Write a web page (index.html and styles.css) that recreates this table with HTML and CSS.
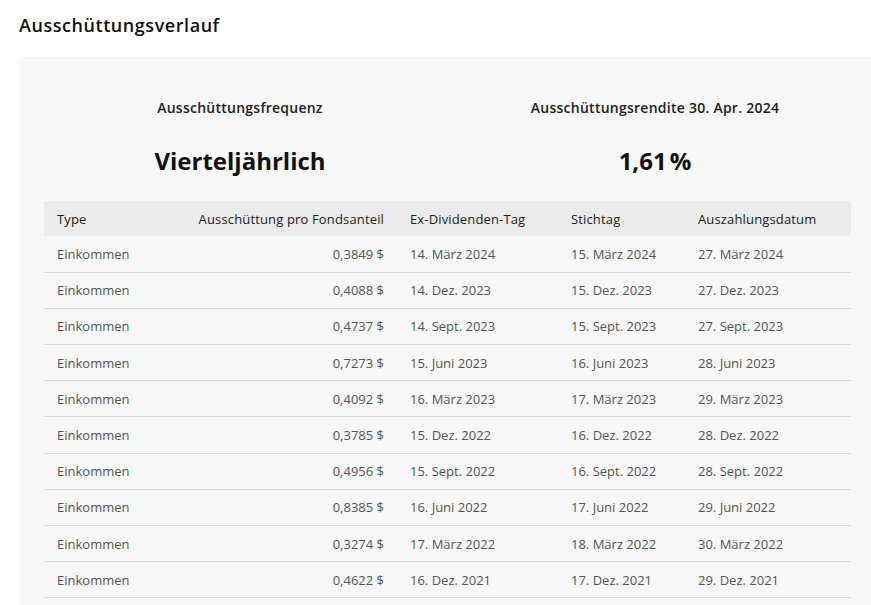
FILE: index.html
```html
<!DOCTYPE html>
<html lang="de">
<head>
<meta charset="utf-8">
<title>Ausschüttungsverlauf</title>
<link rel="stylesheet" href="styles.css">
</head>
<body>
<h2 class="title">Ausschüttungsverlauf</h2>
<section class="panel">
  <div class="stats">
    <div class="stat">
      <div class="stat-label">Ausschüttungsfrequenz</div>
      <div class="stat-value">Vierteljährlich</div>
    </div>
    <div class="stat">
      <div class="stat-label">Ausschüttungsrendite 30. Apr. 2024</div>
      <div class="stat-value">1,61&#8239;%</div>
    </div>
  </div>
  <table class="dist">
    <colgroup>
      <col class="c1"><col class="c2"><col class="c3"><col class="c4"><col class="c5">
    </colgroup>
    <thead>
      <tr><th>Type</th><th class="num">Ausschüttung pro Fondsanteil</th><th>Ex-Dividenden-Tag</th><th>Stichtag</th><th>Auszahlungsdatum</th></tr>
    </thead>
    <tbody>
      <tr><td>Einkommen</td><td class="num">0,3849 $</td><td>14. März 2024</td><td>15. März 2024</td><td>27. März 2024</td></tr>
      <tr><td>Einkommen</td><td class="num">0,4088 $</td><td>14. Dez. 2023</td><td>15. Dez. 2023</td><td>27. Dez. 2023</td></tr>
      <tr><td>Einkommen</td><td class="num">0,4737 $</td><td>14. Sept. 2023</td><td>15. Sept. 2023</td><td>27. Sept. 2023</td></tr>
      <tr><td>Einkommen</td><td class="num">0,7273 $</td><td>15. Juni 2023</td><td>16. Juni 2023</td><td>28. Juni 2023</td></tr>
      <tr><td>Einkommen</td><td class="num">0,4092 $</td><td>16. März 2023</td><td>17. März 2023</td><td>29. März 2023</td></tr>
      <tr><td>Einkommen</td><td class="num">0,3785 $</td><td>15. Dez. 2022</td><td>16. Dez. 2022</td><td>28. Dez. 2022</td></tr>
      <tr><td>Einkommen</td><td class="num">0,4956 $</td><td>15. Sept. 2022</td><td>16. Sept. 2022</td><td>28. Sept. 2022</td></tr>
      <tr><td>Einkommen</td><td class="num">0,8385 $</td><td>16. Juni 2022</td><td>17. Juni 2022</td><td>29. Juni 2022</td></tr>
      <tr><td>Einkommen</td><td class="num">0,3274 $</td><td>17. März 2022</td><td>18. März 2022</td><td>30. März 2022</td></tr>
      <tr><td>Einkommen</td><td class="num">0,4622 $</td><td>16. Dez. 2021</td><td>17. Dez. 2021</td><td>29. Dez. 2021</td></tr>
    </tbody>
  </table>
</section>
</body>
</html>
```
FILE: styles.css
```css
* { box-sizing: border-box; }
html, body { margin: 0; padding: 0; background: #fff; }
body {
  font-family: "Open Sans", "Liberation Sans", sans-serif;
  color: #1a1a1a;
  overflow: hidden;
}
.title {
  margin: 0;
  padding: 13px 0 0 19px;
  height: 57px;
  font-size: 18px;
  line-height: 24px;
  font-weight: 600;
  letter-spacing: 0.55px;
  color: #111;
}
.panel {
  margin-left: 19px;
  background: #f7f7f7;
  padding: 0 20px 40px 25px;
}
.stats {
  display: grid;
  grid-template-columns: 1fr 1fr;
  column-gap: 23px;
  padding-top: 42px;
  height: 144px;
  text-align: center;
}
.stat-label {
  font-size: 14px;
  font-weight: 600;
  letter-spacing: 0.25px;
  color: #222;
  line-height: 18px;
}
.stat-value {
  margin-top: 29px;
  font-size: 24px;
  font-weight: 700;
  color: #111;
  line-height: 30px;
}
.dist {
  width: 100%;
  border-collapse: collapse;
  table-layout: fixed;
  font-size: 13px;
}
.c1 { width: 141px; }
.c2 { width: 212px; }
.c3 { width: 161px; }
.c4 { width: 127px; }
.c5 { width: 166px; }
.dist th {
  background: #ebebeb;
  height: 35px;
  padding: 0 13px;
  text-align: left;
  font-weight: 400;
  letter-spacing: 0.15px;
  color: #222;
}
.dist td {
  height: 36.2px;
  padding: 0 13px;
  color: #555;
  border-bottom: 1px solid #d9d9d9;
}
.dist .num { text-align: right; }
```
